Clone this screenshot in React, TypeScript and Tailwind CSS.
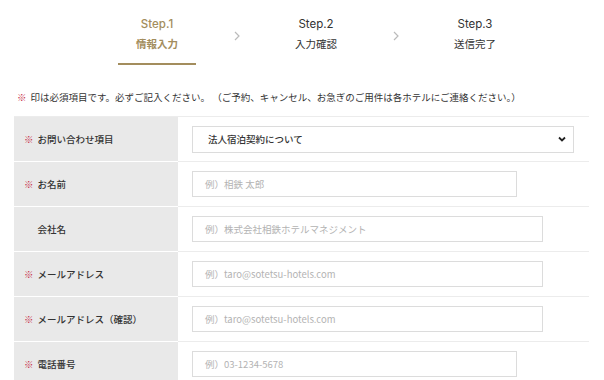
import React from "react";

const font = { fontFamily: '"Noto Sans CJK JP", "Noto Sans", sans-serif' };

const Req = () => <span className="mr-[4px] text-[#c8334b]">※</span>;

type Row = {
  label: string;
  required: boolean;
  kind: "select" | "input";
  placeholder?: string;
  wide?: boolean;
};

const rows: Row[] = [
  { label: "お問い合わせ項目", required: true, kind: "select" },
  { label: "お名前", required: true, kind: "input", placeholder: "例）相鉄 太郎" },
  { label: "会社名", required: false, kind: "input", placeholder: "例）株式会社相鉄ホテルマネジメント", wide: true },
  { label: "メールアドレス", required: true, kind: "input", placeholder: "例）taro@sotetsu-hotels.com", wide: true },
  { label: "メールアドレス（確認）", required: true, kind: "input", placeholder: "例）taro@sotetsu-hotels.com", wide: true },
  { label: "電話番号", required: true, kind: "input", placeholder: "例）03-1234-5678" },
];

const Chevron = () => (
  <div className="flex w-[81px] justify-center pt-[16px] text-[#bbb]">
    <svg width="6" height="10" viewBox="0 0 6 10" fill="none" stroke="currentColor" strokeWidth="1.2">
      <path d="M1 1l4 4-4 4" />
    </svg>
  </div>
);

const Step = ({ n, label, active }: { n: number; label: string; active?: boolean }) => (
  <div className="flex w-[78px] flex-col items-center">
    <div className={`text-[11.5px] leading-[18px] ${active ? "font-medium text-[#a38d5d]" : "text-[#333]"}`} style={{ fontFamily: "Inter, sans-serif" }}>
      Step.{n}
    </div>
    <div className={`mt-[2px] text-[10.5px] leading-[18px] ${active ? "font-bold text-[#a38d5d]" : "text-[#333]"}`}>{label}</div>
    <div className={`mt-[10px] h-[2px] w-full ${active ? "bg-[#a38d5d]" : "bg-transparent"}`} />
  </div>
);

export default function App() {
  return (
    <div className="h-[380px] w-[604px] overflow-hidden bg-white text-[#333]" style={font}>
      <div className="ml-[118px] flex pt-[15px]">
        <Step n={1} label="情報入力" active />
        <Chevron />
        <Step n={2} label="入力確認" />
        <Chevron />
        <Step n={3} label="送信完了" />
      </div>
      <p className="ml-[17px] mt-[24px] text-[9.5px] leading-[16px]">
        <Req />印は必須項目です。必ずご記入ください。 （ご予約、キャンセル、お急ぎのご用件は各ホテルにご連絡ください。）
      </p>
      <div className="ml-[14px] mt-[11px] w-[575px] border-t border-[#ececec]">
        {rows.map((r) => (
          <div key={r.label} className="flex h-[45px]">
            <div className="flex w-[164px] items-center border-b border-white bg-[#e9e9e9] pl-[10px] text-[9.5px] font-medium">
              {r.required ? <Req /> : <span className="invisible mr-[4px]">※</span>}
              {r.label}
            </div>
            <div className="flex flex-1 items-center border-b border-[#ececec] pl-[14px]">
              {r.kind === "select" ? (
                <div className="flex h-[27px] w-[382px] items-center justify-between border border-[#dcdcdc] pl-[15px] pr-[7px] text-[9.5px] font-medium">
                  <span>法人宿泊契約について</span>
                  <svg width="8" height="6" viewBox="0 0 8 6" fill="none" stroke="#222" strokeWidth="1.8">
                    <path d="M1 1.5l3 3 3-3" />
                  </svg>
                </div>
              ) : (
                <div className={`flex h-[26px] items-center border border-[#dcdcdc] pl-[12px] text-[9.5px] text-[#b3b3b3] ${r.wide ? "w-[351px]" : "w-[325px]"}`}>
                  {r.placeholder}
                </div>
              )}
            </div>
          </div>
        ))}
      </div>
    </div>
  );
}
